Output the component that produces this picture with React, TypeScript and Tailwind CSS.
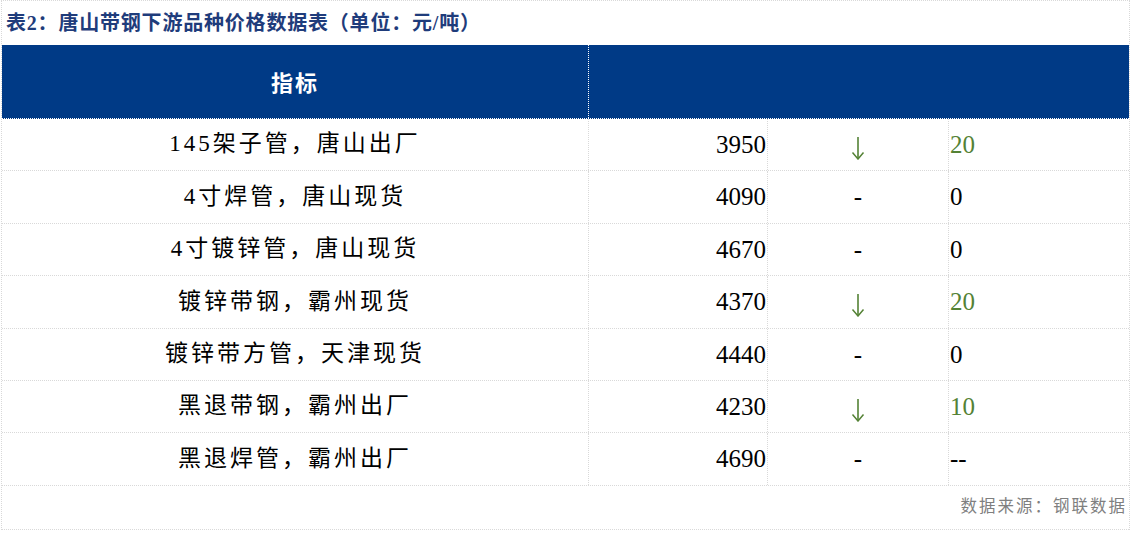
import React from "react";

const rows: { name: string; price: string; down: boolean; chg: string }[] = [
  { name: "145架子管，唐山出厂", price: "3950", down: true, chg: "20" },
  { name: "4寸焊管，唐山现货", price: "4090", down: false, chg: "0" },
  { name: "4寸镀锌管，唐山现货", price: "4670", down: false, chg: "0" },
  { name: "镀锌带钢，霸州现货", price: "4370", down: true, chg: "20" },
  { name: "镀锌带方管，天津现货", price: "4440", down: false, chg: "0" },
  { name: "黑退带钢，霸州出厂", price: "4230", down: true, chg: "10" },
  { name: "黑退焊管，霸州出厂", price: "4690", down: false, chg: "--" },
];

function DownArrow() {
  return (
    <svg width="14" height="24" viewBox="0 0 14 24" className="mt-[6px]">
      <path d="M7 1 V22.5" stroke="#548235" strokeWidth="1.6" fill="none" />
      <path d="M1.5 16.5 L7 23 L12.5 16.5" stroke="#548235" strokeWidth="1.5" fill="none" />
    </svg>
  );
}

export default function App() {
  return (
    <div className="w-[1130px] h-[533px] bg-white overflow-hidden">
      <div className="ml-[1px] w-[1129px] border-t border-r border-l border-dotted border-[#d9d9d9]">
        <div className="h-[44px] flex items-center pl-[4px] text-[20px] font-bold tracking-[0.8px] text-[#1f3c7b] font-['Liberation_Serif','Noto_Sans_CJK_SC',serif]">
          表2：唐山带钢下游品种价格数据表（单位：元/吨）
        </div>
        <div className="flex h-[74px] bg-[#003a86] border-b border-dotted border-white">
          <div className="w-[587px] flex items-center justify-center text-white text-[22px] font-bold tracking-[2px] border-r border-dotted border-white font-['Noto_Sans_CJK_SC',sans-serif]">
            指标
          </div>
          <div className="flex-1" />
        </div>
        {rows.map((r, i) => (
          <div key={i} className="flex h-[52.4px] border-b border-dotted border-[#d9d9d9]">
            <div className="w-[587px] flex items-center justify-center text-[23px] tracking-[3px] text-black border-r border-dotted border-[#d9d9d9] font-['Liberation_Serif','Noto_Sans_CJK_SC',serif]">
              {r.name}
            </div>
            <div className="w-[179px] flex items-center justify-end pr-[1px] text-[25px] text-black border-r border-dotted border-[#d9d9d9] font-['Liberation_Serif',serif]">
              {r.price}
            </div>
            <div className="w-[181px] flex items-center justify-center text-[25px] text-black border-r border-dotted border-[#d9d9d9] font-['Liberation_Serif',serif]">
              {r.down ? <DownArrow /> : "-"}
            </div>
            <div
              className={
                r.down
                  ? "flex-1 flex items-center pl-[1px] text-[25px] text-[#548235] font-['Liberation_Serif',serif]"
                  : "flex-1 flex items-center pl-[1px] text-[25px] text-black font-['Liberation_Serif',serif]"
              }
            >
              {r.chg}
            </div>
          </div>
        ))}
        <div className="h-[44px] flex items-center justify-end pr-[2px] border-b border-dotted border-[#d9d9d9]">
          <span className="text-[16.5px] tracking-[2px] text-[#7f7f7f] font-['Liberation_Serif','Noto_Sans_CJK_SC',serif]">
            数据来源：钢联数据
          </span>
        </div>
      </div>
    </div>
  );
}
